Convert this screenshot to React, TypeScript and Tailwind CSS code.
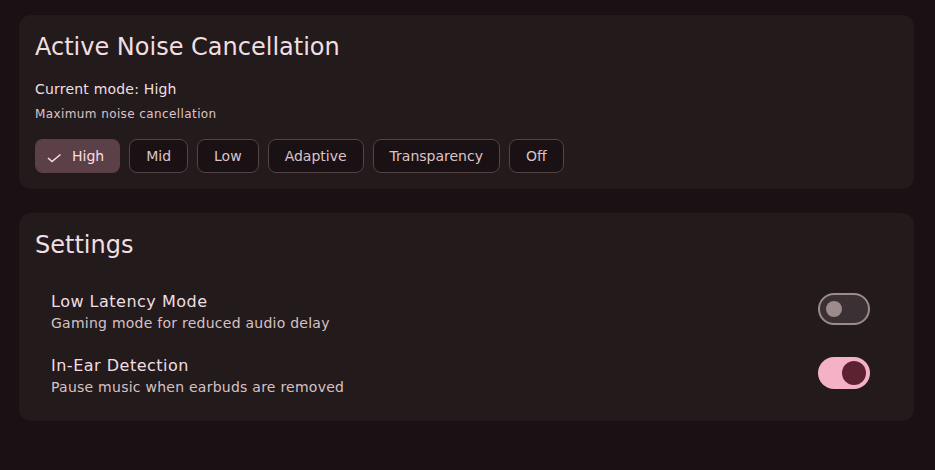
import React from "react";

const font = { fontFamily: '"DejaVu Sans", sans-serif' };

function Chip({ label, selected }: { label: string; selected?: boolean }) {
  if (selected) {
    return (
      <div className="flex h-[34px] items-center rounded-lg bg-[#5c4047] pl-[10px] pr-4 text-[14px] text-[#f8dce4]">
        <svg width="18" height="18" viewBox="0 0 18 18" className="mr-[9px]">
          <polyline points="3,11 7,14.5 15.5,7.5" fill="none" stroke="#f8dce4" strokeWidth="1.6" />
        </svg>
        {label}
      </div>
    );
  }
  return (
    <div className="flex h-[34px] items-center rounded-lg border border-[#524347] bg-[#1a1114] px-4 text-[14px] text-[#ddc3c8]">
      {label}
    </div>
  );
}

function Toggle({ on }: { on?: boolean }) {
  if (on) {
    return (
      <div className="mb-[6px] flex h-[32px] w-[52px] items-center justify-end rounded-full bg-[#f5b1c6] pr-[4px]">
        <div className="h-[24px] w-[24px] rounded-full bg-[#5c2231]" />
      </div>
    );
  }
  return (
    <div className="mb-[6px] flex h-[32px] w-[52px] items-center rounded-full border-2 border-[#9c8a8d] bg-[#3b3033] pl-[6px]">
      <div className="h-[16px] w-[16px] rounded-full bg-[#9c8a8d]" />
    </div>
  );
}

function Row({ title, sub, on }: { title: string; sub: string; on?: boolean }) {
  return (
    <div className="flex items-center justify-between pl-4 pr-[28px]">
      <div className="flex flex-col">
        <div className="text-[16px] leading-[22px] tracking-[0.5px] text-[#f0dee2]">{title}</div>
        <div className="text-[14px] leading-[20px] tracking-[0.25px] text-[#d6c1c5]">{sub}</div>
      </div>
      <Toggle on={on} />
    </div>
  );
}

export default function App() {
  return (
    <div className="h-[470px] w-[935px] bg-[#1a1114] pl-[19px] pr-[21px] pt-[15px]" style={font}>
      <div className="rounded-xl bg-[#231a1c] px-4 pb-4 pt-[16px]">
        <div className="text-[24px] leading-[32px] text-[#f0dee2]">Active Noise Cancellation</div>
        <div className="mt-[16px] text-[14px] leading-[20px] tracking-[0.2px] text-[#f0dee2]">Current mode: High</div>
        <div className="mt-[6px] text-[12px] leading-[18px] tracking-[0.4px] text-[#ddc3c8]">Maximum noise cancellation</div>
        <div className="mt-[16px] flex gap-[9px]">
          <Chip label="High" selected />
          <Chip label="Mid" />
          <Chip label="Low" />
          <Chip label="Adaptive" />
          <Chip label="Transparency" />
          <Chip label="Off" />
        </div>
      </div>
      <div className="mt-[24px] rounded-xl bg-[#231a1c] px-4 pb-[24px] pt-[16px]">
        <div className="text-[24px] leading-[32px] text-[#f0dee2]">Settings</div>
        <div className="mt-[30px] flex flex-col gap-[22px]">
          <Row title="Low Latency Mode" sub="Gaming mode for reduced audio delay" />
          <Row title="In-Ear Detection" sub="Pause music when earbuds are removed" on />
        </div>
      </div>
    </div>
  );
}
